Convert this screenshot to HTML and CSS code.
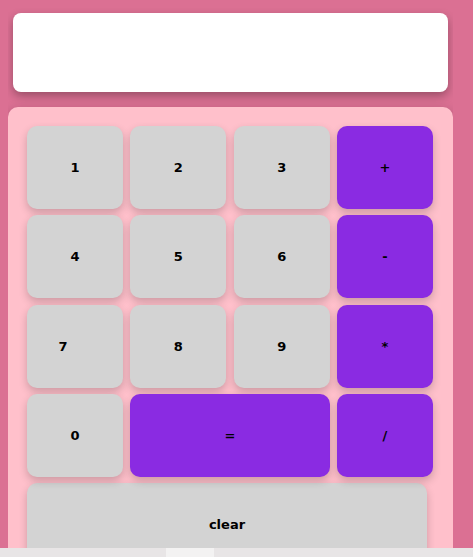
FILE: index.html
```html
<!DOCTYPE html>
<html>
<head>
<meta charset="utf-8">
<link rel="stylesheet" href="styles.css">
</head>
<body>
<div class="display"></div>
<div class="calculator">
  <div class="keys">
    <button class="key">1</button>
    <button class="key">2</button>
    <button class="key">3</button>
    <button class="key op">+</button>
    <button class="key">4</button>
    <button class="key">5</button>
    <button class="key">6</button>
    <button class="key op">-</button>
    <button class="key seven">7</button>
    <button class="key">8</button>
    <button class="key">9</button>
    <button class="key op">*</button>
    <button class="key">0</button>
    <button class="key op wide">=</button>
    <button class="key op">/</button>
  </div>
  <button class="key clear">clear</button>
</div>
<div class="hbar"><div class="thumb"></div></div>
</body>
</html>
```
FILE: styles.css
```css
html, body {
  overflow: hidden;
}
html {
  background: #db7093;
}
body {
  margin: 8px;
  width: 445px;
  font-family: "DejaVu Sans", sans-serif;
  height: 541px;
}
.display {
  margin: 5px 5px 0 5px;
  height: 79px;
  background: #ffffff;
  border-radius: 8px;
  box-shadow: 0 4px 10px rgba(0, 0, 0, 0.3);
}
.calculator {
  margin-top: 15px;
  background: #ffc0cb;
  border-radius: 10px;
  padding: 19px 20px 19px 19px;
  box-shadow: 0 4px 12px rgba(0, 0, 0, 0.25);
  height: 600px;
}
.keys {
  display: grid;
  grid-template-columns: repeat(4, 96px);
  grid-auto-rows: 83px;
  column-gap: 7.33px;
  row-gap: 6.33px;
}
.key {
  border: none;
  border-radius: 10px;
  background: #d3d3d3;
  color: #000;
  font-family: "DejaVu Sans", sans-serif;
  font-weight: bold;
  font-size: 13px;
  box-shadow: 0 4px 8px rgba(0, 0, 0, 0.2);
  padding: 0;
}
.op {
  background: #8a2be2;
}
.wide {
  grid-column: span 2;
}
.seven {
  padding-right: 24px;
}
.clear {
  display: block;
  margin-top: 6.33px;
  width: 400px;
  height: 83px;
}
.hbar {
  position: fixed;
  left: 0;
  right: 0;
  bottom: 0;
  height: 9px;
  background: #e8e5e6;
}
.thumb {
  margin-left: 166px;
  width: 48px;
  height: 9px;
  background: #f3f2f2;
}
```
